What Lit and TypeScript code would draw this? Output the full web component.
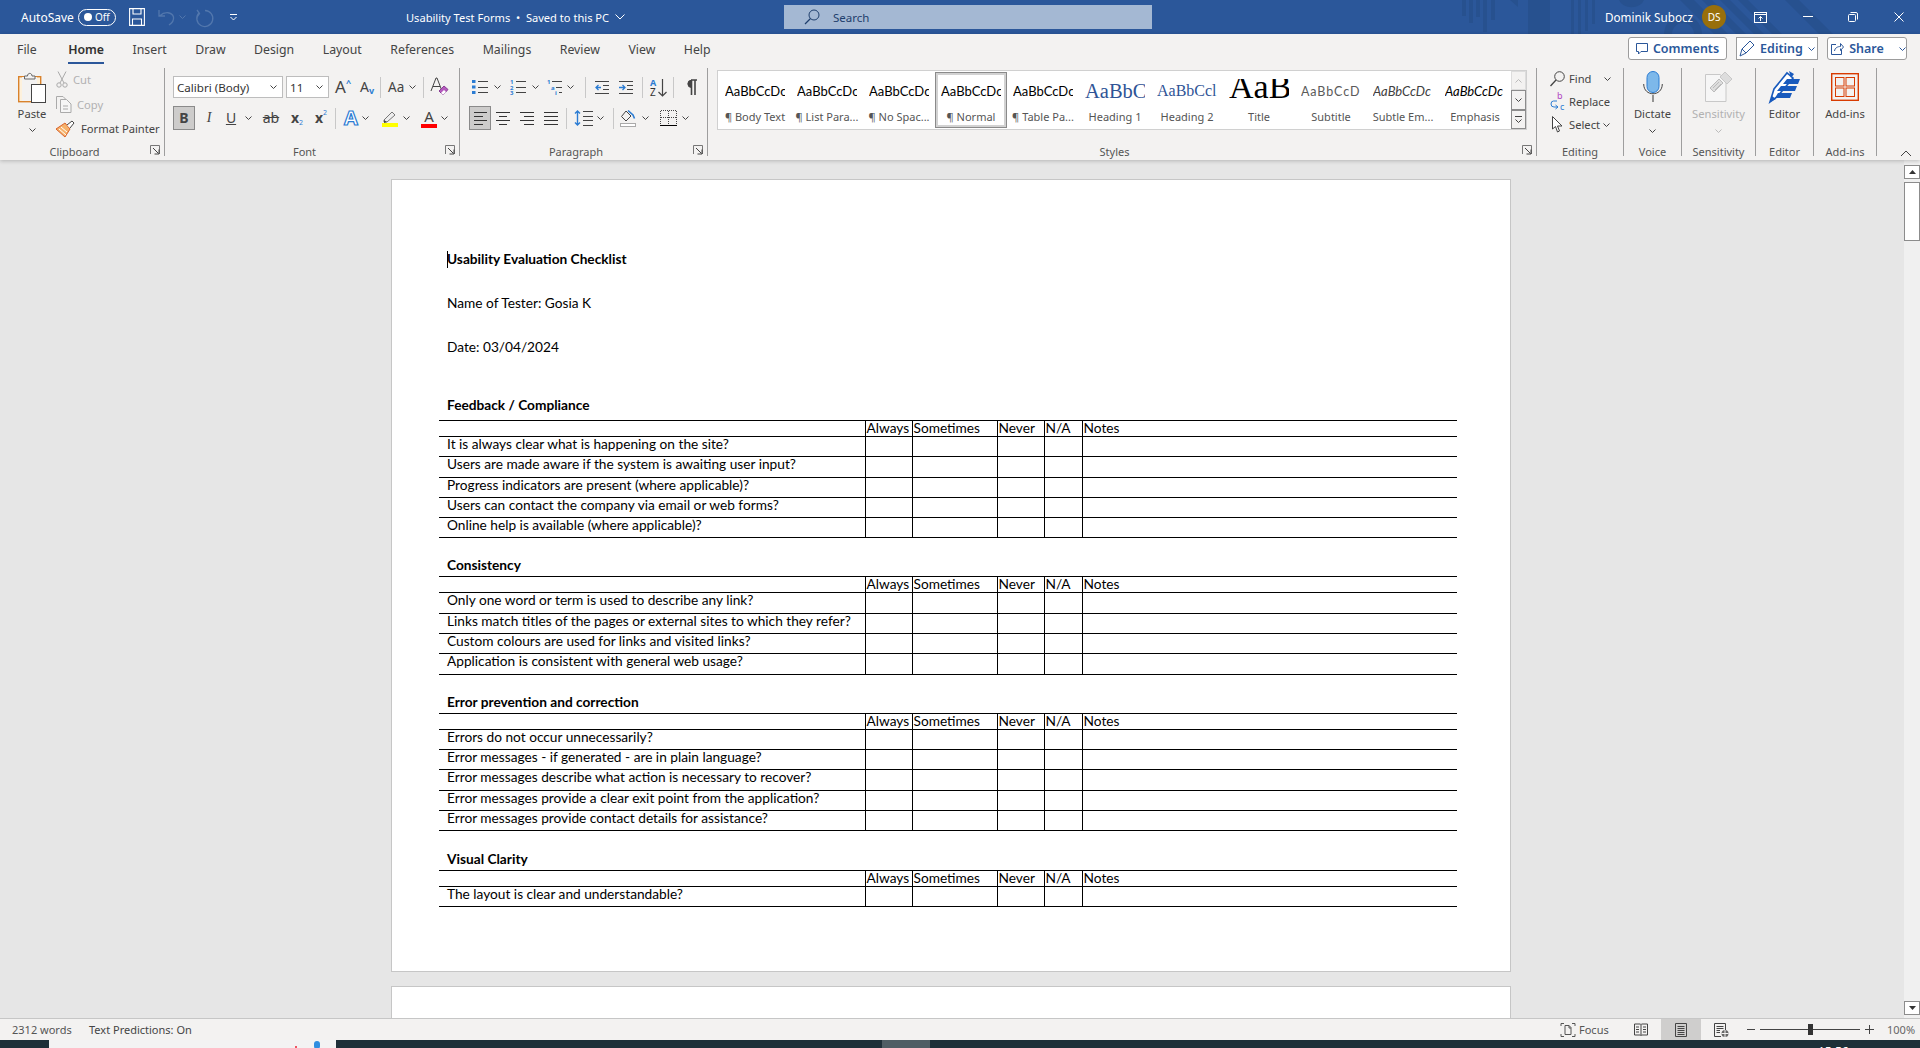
import { LitElement, css, html, svg } from "lit";
import { customElement } from "lit/decorators.js";

const ink = "#444";
const blue = "#2b7cd3";

// small helper so every icon is the same kind of svg
const ico = (w: number, h: number, body: unknown, cls = "") =>
  html`<svg class=${cls} width=${w} height=${h} viewBox="0 0 ${w} ${h}" fill="none">${body}</svg>`;

const chev = (color = "#444") =>
  ico(7, 4, svg`<path d="M.5.5 3.5 3.5 6.5.5" stroke=${color}/>`, "chev");

const lines = (x1: number, x2: number, ys: number[], color = ink) =>
  ys.map((y) => svg`<path d="M${x1} ${y}.5H${x2}" stroke=${color}/>`);

const launcher = ico(
  10,
  10,
  svg`<path d="M.5 9V.5H9.5V9" stroke="#777" fill="none"/><path d="M3 3 8.5 8.5M4.5 9H9V4.5" stroke="#444"/>`,
  "launcher"
);

const tiny = (x: number, y: number, t: string) =>
  svg`<text x=${x} y=${y} font-size="6" font-weight="700" fill=${blue} font-family="Noto Sans">${t}</text>`;

const bullets = ico(
  17,
  16,
  svg`<rect y="1" width="3.5" height="3" fill=${blue}/><rect y="6.5" width="3.5" height="3" fill=${blue}/><rect y="12" width="3.5" height="3" fill=${blue}/>${lines(6, 16, [2, 8, 13])}`
);
const numbering = ico(17, 16, svg`${tiny(0, 5, "1")}${tiny(0, 10.5, "2")}${tiny(0, 16, "3")}${lines(6, 16, [2, 8, 13])}`);
const multilevel = ico(
  17,
  16,
  svg`${tiny(0, 5, "1")}${tiny(4, 10.5, "a")}${tiny(8, 16, "i")}${lines(5, 15, [2])}${lines(9, 15, [8])}${lines(12, 15, [13])}`
);
const outdent = ico(
  15,
  15,
  svg`${lines(0, 14, [1, 13])}${lines(8, 14, [5, 9])}<path d="M6 7.5H1M3.5 5 1 7.5 3.5 10" stroke=${blue} stroke-width="1.3"/>`
);
const indent = ico(
  15,
  15,
  svg`${lines(0, 14, [1, 13])}${lines(8, 14, [5, 9])}<path d="M0 7.5H6M3.5 5 6 7.5 3.5 10" stroke=${blue} stroke-width="1.3"/>`
);
const sortAz = ico(
  17,
  19,
  svg`<text x="0" y="8" font-size="9" font-weight="700" fill=${blue} font-family="Noto Sans">A</text><text x="0" y="18" font-size="10" fill="#333" font-family="Noto Sans">Z</text><path d="M12.5 1V18M8.5 14l4 4 4-4" stroke="#444" stroke-width="1.2"/>`
);
const pilcrow = ico(
  13,
  16,
  svg`<path d="M6 1h6M6.500 1v15M10 1v15" stroke="#444" stroke-width="1.6"/><path d="M6.500 1.200A3.500 3.500 0 0 0 6.500 8.500Z" fill="#444" stroke="#444"/>`
);
const alignIcon = (spans: [number, number][]) =>
  ico(
    15,
    14,
    spans.map(([a, b], i) => svg`<path d="M${a} ${i * 4 + 1}.5H${b}" stroke="#333"/>`)
  );
const lineSpacing = ico(
  20,
  18,
  svg`<path d="M3.500 2V16M1 4.500 3.500 2 6 4.500M1 13.500 3.500 16 6 13.500" stroke=${blue} stroke-width="1.4"/>${lines(9, 19, [2, 7, 11, 16])}`
);
const shading = ico(
  17,
  18,
  svg`<path d="M6 2 1.500 7.500 6 12l5-5Z" stroke="#444"/><path d="M8 1.500 13 6l1.500 3.500" stroke=${blue} stroke-width="1.6"/><rect x=".5" y="14.500" width="15" height="3" stroke="#aaa" fill="#fff"/>`
);
const borders = ico(
  17,
  16,
  svg`<path d="M.5 1V15M16.500 1V15M8.500 1V15M1 .5H16M1 7.500H16" stroke="#444" stroke-dasharray="1 1"/><path d="M0 15.500H17" stroke="#000"/>`
);

const highlight = ico(
  17,
  17,
  svg`<path d="M2 10 10 2l3 3-8 7H2Z" stroke="#777" fill="#eee"/><path d="M2 10l3 2-3 1Z" fill="#444"/><rect y="13" width="16" height="4" fill="#ffff00"/>`
);

const clipboard = ico(
  28,
  32,
  svg`<rect x=".7" y="4.700" width="22" height="25" fill="#fdf1dc" stroke="#d9822b" stroke-width="1.4"/>
    <rect x="4" y="5" width="15" height="24" fill="#f3f2f1"/>
    <path d="M6.500 7V4H9.500C9.500 .5 14 .5 14 4H17V7Z" fill="#f3f2f1" stroke="#666"/>
    <rect x="13.500" y="12.500" width="14" height="18" fill="#fff" stroke="#444"/>`
);
const scissors = ico(
  12,
  17,
  svg`<path d="M2 .5 8 12M10 .5 4 12" stroke="#aaa"/><circle cx="3" cy="14" r="2.200" stroke="#aaa"/><circle cx="9" cy="14" r="2.200" stroke="#aaa"/>`
);
const copyIcon = ico(
  16,
  17,
  svg`<path d="M.5 13V.5H7L10 3.500" stroke="#aaa"/><path d="M4.500 3.500H10.500L15 8V16.500H4.500Z" stroke="#aaa" fill="#f6f6f6"/><path d="M7 10h5M7 13h5" stroke="#aaa"/>`
);
const painter = ico(
  20,
  18,
  svg`<path d="M0 9 9 3l5 6-5 8Z" fill="#f6b26b" stroke="#d9622b"/><path d="M3 9l7 6M5 7l6 5" stroke="#fff"/><path d="M11 5 16 1l2 2-4 5" fill="#fff" stroke="#444"/>`
);
const fancyA = html`<span class="fancy-a">A</span>`;
const clearFmt = ico(
  19,
  20,
  svg`<path d="M1 14 6 1h1l5 13M3 9.500H10" stroke="#444"/><path d="M9 14 14 9l4 3.500-5 5.500Z" fill="#b45bbd" stroke="#8a3d96"/><path d="M11 16l3-3 2 2-3 3Z" fill="#fff"/>`
);

const findIcon = ico(
  15,
  16,
  svg`<circle cx="9.500" cy="5.500" r="4.800" stroke="#444"/><path d="M6 9 .5 15" stroke="#444" stroke-width="1.3"/>`
);
const replaceIcon = ico(
  16,
  19,
  svg`<text x="7" y="7" font-size="9" fill="#b146c2" font-family="Noto Sans">b</text><text x="10" y="18" font-size="9" fill=${blue} font-family="Noto Sans">c</text><path d="M7 9H3.500Q1 9 1 12t3 3H8M5.500 13 8 15 5.500 17" stroke=${blue}/>`
);
const selectIcon = ico(
  11,
  17,
  svg`<path d="M.5.500V13L3.500 10.500 5.500 16 7.500 15 5.500 10H10Z" fill="#fff" stroke="#444"/>`
);
const micIcon = ico(
  20,
  31,
  svg`<rect x="4" y=".5" width="12" height="21" rx="6" fill="#7db8ea" stroke="#2b7cd3"/><path d="M.7 13C.7 26 19.300 26 19.300 13" stroke="#444"/><path d="M10 24V31" stroke="#555" stroke-width="1.2"/>`
);
const sensIcon = ico(
  28,
  31,
  svg`<path d="M.5 3.500H15L21 9V30.500H.5Z" fill="#f6f6f6" stroke="#c8c8c8"/><path d="M5 17 14 8l4 4-9 9Z" fill="#ddd" stroke="#bbb"/><path d="M8 17l6-6M10 19l6-6" stroke="#bbb"/><path d="M15 6 20 1l7 7-5 5Z" fill="#ddd" stroke="#c8c8c8"/>`
);
const editorIcon = ico(
  32,
  33,
  svg`<path d="M1 32 5 19 18 3l6 5L8 27Z" fill="#fff" stroke="#185abd" stroke-width="1.600"/><path d="M1 32l6-3-4-3Z" fill="#185abd"/><path d="M20 1l5 3-3 4ZM18 9H31l-2 5H14ZM12 16H28l-2 5H8ZM9 23H23l-2 5H6Z" fill="#185abd"/>`
);
const addinsIcon = ico(
  28,
  28,
  svg`<rect x=".7" y=".7" width="26.600" height="26.600" stroke="#d83b01" stroke-width="1.4"/><rect x="4.500" y="4.500" width="8.500" height="8.500" stroke="#d83b01"/><rect x="15" y="4.500" width="8.500" height="8.500" stroke="#d83b01"/><rect x="4.500" y="15" width="8.500" height="8.500" stroke="#d83b01"/><rect x="15" y="15" width="8.500" height="8.500" stroke="#d83b01"/>`
);

interface StyleItem {
  sample: string;
  label: string;
  cls?: string;
}
const galleryItems: StyleItem[] = [
  { sample: "AaBbCcDc", label: "¶ Body Text" },
  { sample: "AaBbCcDc", label: "¶ List Para..." },
  { sample: "AaBbCcDc", label: "¶ No Spac..." },
  { sample: "AaBbCcDc", label: "¶ Normal", cls: "selected" },
  { sample: "AaBbCcDc", label: "¶ Table Pa..." },
  { sample: "AaBbC", label: "Heading 1", cls: "h1" },
  { sample: "AaBbCcl", label: "Heading 2", cls: "h2" },
  { sample: "AaB", label: "Title", cls: "title" },
  { sample: "AaBbCcD", label: "Subtitle", cls: "subtitle" },
  { sample: "AaBbCcDc", label: "Subtle Em...", cls: "subtle" },
  { sample: "AaBbCcDc", label: "Emphasis", cls: "emph" },
];

interface Section {
  title: string;
  rows: string[];
}
const sections: Section[] = [
  {
    title: "Feedback / Compliance",
    rows: [
      "It is always clear what is happening on the site?",
      "Users are made aware if the system is awaiting user input?",
      "Progress indicators are present (where applicable)?",
      "Users can contact the company via email or web forms?",
      "Online help is available (where applicable)?",
    ],
  },
  {
    title: "Consistency",
    rows: [
      "Only one word or term is used to describe any link?",
      "Links match titles of the pages or external sites to which they refer?",
      "Custom colours are used for links and visited links?",
      "Application is consistent with general web usage?",
    ],
  },
  {
    title: "Error prevention and correction",
    rows: [
      "Errors do not occur unnecessarily?",
      "Error messages - if generated - are in plain language?",
      "Error messages describe what action is necessary to recover?",
      "Error messages provide a clear exit point from the application?",
      "Error messages provide contact details for assistance?",
    ],
  },
  {
    title: "Visual Clarity",
    rows: ["The layout is clear and understandable?"],
  },
];

const tabs = ["File", "Home", "Insert", "Draw", "Design", "Layout", "References", "Mailings", "Review", "View", "Help"];
const answers = ["Always", "Sometimes", "Never", "N/A", "Notes"];

@customElement("app-root")
export class AppRoot extends LitElement {
  static styles = css`
    :host {
      display: block;
      width: 1920px;
      height: 1048px;
      overflow: hidden;
      font-family: "Noto Sans", "Open Sans", sans-serif;
      font-size: 12px;
      color: #444;
      background: #e6e6e6;
    }
    * {
      box-sizing: border-box;
    }
    svg {
      display: block;
      flex: none;
      overflow: visible;
    }
    .shell {
      display: flex;
      flex-direction: column;
      height: 1048px;
    }

    /* title bar */
    .titlebar {
      position: relative;
      flex: none;
      height: 34px;
      background: #2b579a;
      color: #fff;
      display: flex;
      align-items: center;
      padding-left: 21px;
    }
    .art {
      position: absolute;
      left: 1440px;
      top: 0;
    }
    .autosave {
      width: 57px;
      font-size: 12px;
    }
    .toggle {
      width: 38px;
      height: 17px;
      border: 1.2px solid #fff;
      border-radius: 9px;
      display: flex;
      align-items: center;
      gap: 3px;
      padding-left: 5px;
      font-size: 10px;
      margin-right: 13px;
    }
    .toggle i {
      width: 8px;
      height: 8px;
      border-radius: 50%;
      background: #fff;
    }
    .qat {
      display: flex;
      align-items: center;
    }
    .qat .undo {
      margin-left: 13px;
    }
    .qat .chev {
      margin-left: 4px;
    }
    .qat .redo {
      margin-left: 10px;
    }
    .qat .custom {
      margin-left: 16px;
    }
    .doc-title {
      position: absolute;
      left: 406px;
      top: 0;
      height: 34px;
      display: flex;
      align-items: center;
      gap: 6px;
      font-size: 11.1px;
      white-space: nowrap;
    }
    .search {
      position: absolute;
      left: 784px;
      top: 5px;
      width: 368px;
      height: 24px;
      background: #a4b8d3;
      color: #1f3f6d;
      display: flex;
      align-items: center;
      gap: 13px;
      padding-left: 20px;
      font-size: 11.5px;
    }
    .user {
      position: absolute;
      left: 1605px;
      top: 0;
      height: 34px;
      display: flex;
      align-items: center;
      font-size: 11.7px;
      white-space: nowrap;
    }
    .avatar {
      width: 24px;
      height: 24px;
      border-radius: 50%;
      background: #986f0b;
      display: flex;
      align-items: center;
      justify-content: center;
      font-size: 10px;
      margin-left: 9px;
      margin-right: 28px;
    }
    .winbtns {
      display: flex;
      align-items: center;
      gap: 35.5px;
    }

    /* ribbon */
    .ribbon {
      flex: none;
      height: 126px;
      background: #f3f2f1;
      box-shadow: 0 1px 4px rgba(0, 0, 0, 0.22);
      position: relative;
      z-index: 2;
      font-size: 11.2px;
    }
    .tabrow {
      position: relative;
      height: 30px;
      display: flex;
      align-items: center;
      gap: 28.5px;
      padding-left: 17px;
      font-size: 12.3px;
      color: #444;
    }
    .tab.active {
      color: #323130;
      font-weight: 600;
      position: relative;
      margin-left: 3px;
    }
    .tab.active::after {
      content: "";
      position: absolute;
      left: 0;
      right: 0;
      bottom: -6px;
      height: 2px;
      background: #2b579a;
    }
    .actions {
      position: absolute;
      left: 1628px;
      top: 3px;
      display: flex;
      gap: 9px;
    }
    .action {
      height: 23px;
      background: #fff;
      border: 1px solid #9c9c9c;
      border-radius: 3px;
      display: flex;
      align-items: center;
      justify-content: center;
      gap: 5px;
      color: #2b579a;
      font-size: 12.5px;
      font-weight: 600;
    }
    .action.comments {
      width: 99px;
    }
    .action.editing {
      width: 82px;
      border-radius: 0;
    }
    .action.share {
      width: 80px;
      padding-left: 3px;
    }
    .groups {
      display: flex;
      height: 96px;
      padding-top: 4px;
    }
    .group {
      position: relative;
      flex: none;
      height: 88px;
      border-right: 1px solid #9e9e9e;
    }
    .g-label {
      position: absolute;
      left: 0;
      right: 0;
      top: 77px;
      text-align: center;
      font-size: 11px;
      line-height: 14px;
      color: #555;
    }
    .launched .g-label {
      right: 15px;
    }
    .launcher {
      position: absolute;
      right: 4px;
      bottom: 1px;
    }
    .g-clip {
      width: 165px;
      display: flex;
      padding-left: 16px;
    }
    .paste {
      width: 32px;
      display: flex;
      flex-direction: column;
      align-items: center;
      padding-top: 4px;
      color: #444;
    }
    .paste span {
      margin-top: 2px;
      line-height: 16px;
    }
    .paste .chev {
      margin-top: 6px;
    }
    .clip-list {
      margin-left: 8px;
      display: flex;
      flex-direction: column;
      gap: 4.5px;
      padding-top: 1.5px;
    }
    .clip-list div {
      display: flex;
      align-items: center;
      height: 20px;
      gap: 5px;
      white-space: nowrap;
    }
    .muted {
      color: #b1b1b1;
    }
    .g-font {
      width: 295px;
      padding: 7px 0 0 8px;
    }
    .g-para {
      width: 248px;
      padding: 7px 0 0 9px;
    }
    .row {
      display: flex;
      align-items: center;
      height: 24px;
    }
    .row + .row {
      margin-top: 7px;
    }
    .combo {
      height: 22px;
      background: #fff;
      border: 1px solid #bdbdbd;
      display: flex;
      align-items: center;
      justify-content: space-between;
      padding: 0 5px 0 3px;
      font-size: 11.6px;
      color: #333;
    }
    .combo.name {
      width: 110px;
      margin-right: 3px;
    }
    .combo.size {
      width: 43px;
      margin-right: 6px;
    }
    .growA {
      font-size: 17px;
      line-height: 20px;
      display: flex;
      width: 25px;
      color: #444;
    }
    .growA.small {
      font-size: 14px;
      width: 20px;
      align-items: flex-end;
    }
    .growA em {
      font-style: normal;
      color: #2b7cd3;
      font-size: 9px;
      font-weight: 700;
      line-height: 12px;
    }
    .sep {
      width: 1px;
      height: 21px;
      background: #c8c8c8;
      flex: none;
    }
    .btn {
      display: flex;
      align-items: center;
      justify-content: center;
      flex: none;
      color: #444;
    }
    .on {
      background: #cdcccb;
      border: 1px solid #8a8a8a;
      height: 24px;
    }
    .aa {
      font-size: 13.5px;
      margin-right: 5px;
    }
    .w22 {
      width: 22px;
    }
    .fmt {
      font-size: 14px;
      line-height: 18px;
    }
    .bold {
      width: 22px;
      font-weight: 700;
      margin-right: 6px;
    }
    .ital {
      width: 16px;
      font-style: italic;
      font-family: "Liberation Serif", serif;
      margin-right: 8px;
    }
    .under {
      width: 12px;
      text-decoration: underline;
      margin-right: 8px;
    }
    .strike {
      width: 18px;
      text-decoration: line-through;
      margin: 0 10px 0 10px;
    }
    .script {
      width: 14px;
      font-weight: 700;
      margin-right: 10px;
    }
    .script b {
      color: #2b7cd3;
      font-size: 7px;
      font-weight: 400;
      line-height: 8px;
      position: relative;
    }
    .script b.down {
      top: 5px;
    }
    .script b.up {
      top: -5px;
    }
    .fancy-a {
      font-size: 20px;
      line-height: 20px;
      font-weight: 700;
      color: #fff;
      -webkit-text-stroke: 1.2px #2b7cd3;
      width: 16px;
      text-align: center;
    }
    .color-a {
      width: 16px;
      display: flex;
      flex-direction: column;
      align-items: center;
      font-size: 15px;
      line-height: 16px;
      color: #444;
    }
    .color-a i {
      width: 16px;
      height: 4px;
      background: #f00;
    }
    .m3 {
      margin-right: 3px;
    }
    .m4 {
      margin-right: 4px;
    }
    .m5 {
      margin-right: 5px;
    }
    .m6 {
      margin-right: 6px;
    }
    .m7 {
      margin-right: 7px;
    }
    .m8 {
      margin-right: 8px;
    }
    .m9 {
      margin-right: 9px;
    }
    .m11 {
      margin-right: 11px;
    }
    .m12 {
      margin-right: 12px;
    }
    .m13 {
      margin-right: 13px;
    }
    .g-styles {
      width: 829px;
      padding: 2px 0 0 9px;
    }
    .gallery {
      width: 810px;
      height: 60px;
      display: flex;
      background: #fff;
      border: 1px solid #d0d0d0;
    }
    .gal-items {
      display: flex;
      flex: 1;
      padding: 1px 0 0 1px;
    }
    .gal-item {
      width: 72px;
      height: 56px;
      display: flex;
      flex-direction: column;
      align-items: center;
      overflow: hidden;
      padding: 7px 6px 0;
    }
    .gal-item.selected {
      border: 3px solid #d2d2d2;
      outline: 1px solid #8a8a8a;
      outline-offset: -1px;
      padding: 4px 3px 0;
    }
    .sample {
      height: 24px;
      display: flex;
      align-items: center;
      justify-content: flex-start;
      width: 100%;
      overflow: hidden;
      white-space: nowrap;
      font-family: Lato, sans-serif;
      font-size: 13px;
      color: #000;
    }
    .gal-label {
      margin-top: 6px;
      font-size: 11px;
      line-height: 15px;
      color: #555;
      white-space: nowrap;
    }
    .h1 .sample {
      font-family: "Liberation Serif", serif;
      font-size: 20.5px;
      color: #2f5496;
    }
    .h2 .sample {
      font-family: "Liberation Serif", serif;
      font-size: 16px;
      color: #2f5496;
    }
    .title .sample {
      font-family: "Liberation Serif", serif;
      font-size: 34px;
      padding: 0 0 9px;
    }
    .subtitle .sample {
      color: #5a5a5a;
      letter-spacing: 0.9px;
      font-size: 12.5px;
    }
    .subtle .sample {
      color: #404040;
      font-style: italic;
    }
    .emph .sample {
      font-style: italic;
    }
    .gal-scroll {
      width: 15px;
      display: flex;
      flex-direction: column;
      flex: none;
    }
    .gal-scroll div {
      height: 20px;
      display: flex;
      flex-direction: column;
      align-items: center;
      justify-content: center;
      gap: 2px;
      border: 1px solid #8c8c8c;
      background: #f3f2f1;
    }
    .gal-scroll .up {
      border-color: #ddd;
    }
    .g-edit {
      width: 87px;
      padding: 0 0 0 12px;
    }
    .edit-row {
      height: 23px;
      display: flex;
      align-items: center;
      white-space: nowrap;
    }
    .edit-row:first-child {
      margin-top: -1px;
    }
    .edit-ico {
      width: 17px;
      flex: none;
      display: flex;
      justify-content: center;
      margin-right: 3px;
    }
    .big {
      display: flex;
      flex-direction: column;
      align-items: center;
      padding-top: 2px;
    }
    .big-ico {
      height: 33px;
      display: flex;
      align-items: center;
    }
    .big span {
      margin-top: 3px;
      line-height: 16px;
    }
    .big .chev {
      margin-top: 7px;
    }
    .collapse {
      position: absolute;
      left: 1900px;
      top: 116px;
    }

    /* document */
    .workspace {
      flex: 1;
      min-height: 0;
      display: flex;
      position: relative;
    }
    .canvas {
      flex: 1;
      overflow: hidden;
      padding: 19px 0 0 391px;
    }
    .page {
      width: 1120px;
      height: 793px;
      background: #fff;
      border: 1px solid #c6c6c6;
      padding: 69px 0 0 55px;
      font-family: Lato, sans-serif;
      font-size: 13.7px;
      color: #000;
    }
    .page.next {
      margin-top: 14px;
      height: 60px;
    }
    .para {
      height: 20px;
      line-height: 20px;
      position: relative;
    }
    .para.bold-line {
      font-weight: 700;
    }
    .para + .para {
      margin-top: 24px;
    }
    .caret {
      position: absolute;
      left: 0;
      top: 2px;
      width: 1px;
      height: 17px;
      background: #000;
    }
    .section h2 {
      margin: 17px 0 1px;
      height: 20px;
      line-height: 20px;
      font-size: inherit;
      font-weight: 700;
    }
    .section.first h2 {
      margin: 38px 0 5px;
    }
    .section:last-child h2 {
      margin-top: 18px;
    }
    table {
      border-collapse: collapse;
      table-layout: fixed;
      width: 1018px;
      margin-left: -8px;
    }
    th,
    td {
      border-bottom: 1px solid #000;
      font-weight: 400;
      text-align: left;
      padding: 0 0 0 1px;
      overflow: hidden;
      white-space: nowrap;
    }
    tr:first-child th {
      border-top: 1px solid #000;
    }
    th + th,
    td + td {
      border-left: 1px solid #000;
    }
    tr.head th {
      height: 16px;
      line-height: 14px;
      vertical-align: top;
    }
    tr.item td {
      height: 20.3px;
      line-height: 14px;
      vertical-align: top;
    }
    td:first-child {
      padding-left: 8px;
    }
    .c0 {
      width: 426px;
    }
    .c1 {
      width: 47px;
    }
    .c2 {
      width: 85px;
    }
    .c3 {
      width: 47px;
    }
    .c4 {
      width: 38px;
    }
    .c5 {
      width: 375px;
    }

    /* scrollbar */
    .vscroll {
      width: 16px;
      flex: none;
      background: #f0f0f0;
      display: flex;
      flex-direction: column;
      padding-top: 5px;
    }
    .sb-btn {
      height: 14px;
      background: #fff;
      border: 1px solid #8c8c8c;
      display: flex;
      align-items: center;
      justify-content: center;
    }
    .thumb {
      height: 59px;
      margin-top: 3px;
      background: #fff;
      border: 1px solid #8c8c8c;
    }
    .sb-fill {
      flex: 1;
    }
    .sb-btn.down {
      margin-bottom: 3px;
    }

    /* status bar */
    .status {
      flex: none;
      height: 22px;
      background: #f3f2f1;
      border-top: 1px solid #c6c6c6;
      display: flex;
      align-items: center;
      font-size: 11px;
      color: #555;
      padding-left: 12px;
      position: relative;
      z-index: 1;
    }
    .status .words {
      width: 77px;
    }
    .status .pred {
      width: 1472px;
      color: #444;
    }
    .s-focus {
      display: flex;
      align-items: center;
      gap: 4px;
      width: 60px;
      color: #555;
    }
    .view {
      width: 40px;
      height: 21px;
      display: flex;
      align-items: center;
      justify-content: center;
      flex: none;
    }
    .view.on-view {
      background: #cfcecd;
    }
    .zoomer {
      display: flex;
      align-items: center;
      margin-left: 6px;
    }
    .slider {
      width: 100px;
      height: 1px;
      background: #444;
      margin: 0 5px;
      position: relative;
    }
    .slider i {
      position: absolute;
      left: 48px;
      top: -5px;
      width: 5px;
      height: 11px;
      background: #333;
    }
    .pct {
      margin-left: 13px;
      color: #666;
    }

    /* task bar peeking in below the window */
    .taskbar {
      flex: none;
      height: 8px;
      background: #1e2f38;
      position: relative;
      overflow: hidden;
      display: flex;
    }
    .tb-app {
      margin-left: 49px;
      width: 287px;
      background: #f3f3f3;
      position: relative;
    }
    .tb-dot {
      position: absolute;
      left: 265px;
      top: 1px;
      width: 6px;
      height: 8px;
      border-radius: 3px;
      background: #2f8ee0;
    }
    .tb-dot.red {
      left: 246px;
      top: 6px;
      width: 2px;
      height: 2px;
      background: #e23;
    }
    .tb-active {
      margin-left: 546px;
      width: 48px;
      background: #4f5d64;
    }
    .tb-clock {
      position: absolute;
      left: 1818px;
      top: 5px;
      color: #fff;
      font-size: 12px;
      line-height: 14px;
    }
  `;

  private section(s: Section, i: number) {
    return html`<div class="section ${i === 0 ? "first" : ""}">
      <h2>${s.title}</h2>
      <table>
        <colgroup>
          <col class="c0" /><col class="c1" /><col class="c2" /><col class="c3" /><col class="c4" /><col class="c5" />
        </colgroup>
        <thead>
          <tr class="head">
            <th></th>
            ${answers.map((a) => html`<th>${a}</th>`)}
          </tr>
        </thead>
        <tbody>
          ${s.rows.map(
            (r) => html`<tr class="item">
              <td>${r}</td>
              ${answers.map(() => html`<td></td>`)}
            </tr>`
          )}
        </tbody>
      </table>
    </div>`;
  }

  private titlebar() {
    return html`<div class="titlebar">
      <svg class="art" width="480" height="34" viewBox="0 0 480 34" fill="none">
        <g fill="#27518f">
          <rect x="22" y="0" width="4" height="16" />
          <rect x="29" y="0" width="4" height="23" />
          <rect x="36" y="0" width="4" height="17" />
          <rect x="43" y="0" width="4" height="32" />
          <rect x="51" y="0" width="4" height="20" />
          <path d="M70 0h8v7l-8-7ZM88 0h22V34H88Z" />
          <rect x="131" y="0" width="3" height="34" />
          <rect x="138" y="0" width="3" height="34" />
          <rect x="145" y="0" width="3" height="31" />
          <rect x="152" y="0" width="3" height="24" />
          <path d="M179 0h25a13 10 0 0 1-25 0Z" />
          <path d="M224 34a19 19 0 0 1 38 0h-8a11 11 0 0 0-22 0Z" />
          <path d="M240 0h14l34 34h-14ZM262 0h10l34 34h-10ZM280 0h10l34 34h-10ZM298 0h10l34 34h-10Z" />
          <path d="M345 0h14l34 34h-14Z" />
        </g>
      </svg>
      <span class="autosave">AutoSave</span>
      <div class="toggle"><i></i>Off</div>
      <div class="qat">
        ${ico(
          16,
          18,
          svg`<path d="M.6.600H15.400V17.400H.6ZM4 .6V6H12V.6M3.500 17.400V11H12.500V17.400" stroke="#fff" stroke-width="1.1"/>`
        )}
        ${ico(
          17,
          18,
          svg`<path d="M1 2V8H7M1.500 8C7 3 14 4 15.500 9 16 12 14 15 11 17" stroke="#5277ad" stroke-width="1.300"/>`,
          "undo"
        )}
        ${chev("#5277ad")}
        ${ico(
          18,
          18,
          svg`<path d="M9 1.500A8 8 0 1 1 3 4M1 1 3.500 4.500 1 8" stroke="#5277ad" stroke-width="1.300" transform="translate(0 1)"/>`,
          "redo"
        )}
        ${ico(7, 7, svg`<path d="M0 .5H7M.5 3 3.500 6 6.500 3" stroke="#fff"/>`, "custom")}
      </div>
      <div class="doc-title">
        <span>Usability Test Forms&nbsp; •&nbsp; Saved to this PC</span>
        ${ico(10, 6, svg`<path d="M.5.500 5 5 9.500.500" stroke="#fff"/>`)}
      </div>
      <div class="search">
        ${ico(
          16,
          16,
          svg`<circle cx="10" cy="6" r="5" stroke="#1f3f6d"/><path d="M6.500 9.500 1 15" stroke="#1f3f6d" stroke-width="1.3"/>`
        )}
        <span>Search</span>
      </div>
      <div class="user">
        <span>Dominik Subocz</span>
        <div class="avatar">DS</div>
        <div class="winbtns">
          ${ico(
            13,
            11,
            svg`<rect x=".5" y=".5" width="12" height="10" stroke="#fff"/><path d="M.5 2.500H12.500M6.500 9V4.500M4.500 6.500l2-2 2 2" stroke="#fff"/>`
          )}
          ${ico(10, 2, svg`<path d="M0 .5H10" stroke="#fff"/>`)}
          ${ico(10, 10, svg`<rect x=".5" y="2.500" width="7" height="7" rx="1" stroke="#fff"/><path d="M2.500.5H8A1.500 1.500 0 0 1 9.500 2V7.500" stroke="#fff"/>`)}
          ${ico(10, 10, svg`<path d="M.5.500 9.500 9.500M9.500.500.5 9.500" stroke="#fff"/>`)}
        </div>
      </div>
    </div>`;
  }

  private fontGroup() {
    return html`<div class="group g-font launched">
      <div class="row">
        <div class="combo name">Calibri (Body) ${chev()}</div>
        <div class="combo size">11 ${chev()}</div>
        <div class="growA">A<em>^</em></div>
        <div class="growA small">A<em>v</em></div>
        <div class="sep m7"></div>
        <div class="btn aa">Aa</div>
        ${chev()}
        <span class="m7"></span>
        <div class="sep m6"></div>
        ${clearFmt}
      </div>
      <div class="row">
        <div class="btn on fmt bold">B</div>
        <div class="btn fmt ital">I</div>
        <div class="btn fmt under">U</div>
        ${chev()}
        <div class="btn fmt strike">ab</div>
        <div class="btn fmt script">x<b class="down">2</b></div>
        <div class="btn fmt script m7">x<b class="up">2</b></div>
        <div class="sep m7"></div>
        ${fancyA}<span class="m3"></span>${chev()}
        <span class="m13"></span>${highlight}<span class="m4"></span>${chev()}
        <span class="m11"></span>
        <div class="color-a">A<i></i></div>
        <span class="m4"></span>${chev()}
      </div>
      <div class="g-label">Font</div>
      ${launcher}
    </div>`;
  }

  private paragraphGroup() {
    return html`<div class="group g-para launched">
      <div class="row">
        <span class="m3"></span>${bullets}<span class="m5"></span>${chev()}
        <span class="m9"></span>${numbering}<span class="m5"></span>${chev()}
        <span class="m8"></span>${multilevel}<span class="m3"></span>${chev()}
        <span class="m11"></span><div class="sep m9"></div>
        ${outdent}<span class="m9"></span>${indent}<span class="m8"></span>
        <div class="sep m7"></div>
        ${sortAz}<span class="m6"></span><div class="sep m11"></div>
        ${pilcrow}
      </div>
      <div class="row">
        <div class="btn on m5 w22">${alignIcon([[1, 14], [1, 10], [1, 14], [1, 10]])}</div>
        ${alignIcon([[0, 14], [3, 11], [0, 14], [3, 11]])}<span class="m9"></span>
        ${alignIcon([[0, 14], [4, 14], [0, 14], [4, 14]])}<span class="m9"></span>
        ${alignIcon([[0, 14], [0, 14], [0, 14], [0, 14]])}<span class="m7"></span>
        <div class="sep m7"></div>
        ${lineSpacing}<span class="m3"></span>${chev()}<span class="m9"></span>
        <div class="sep m6"></div>
        ${shading}<span class="m5"></span>${chev()}<span class="m11"></span>
        ${borders}<span class="m5"></span>${chev()}
      </div>
      <div class="g-label">Paragraph</div>
      ${launcher}
    </div>`;
  }

  private stylesGroup() {
    return html`<div class="group g-styles launched">
      <div class="gallery">
        <div class="gal-items">
          ${galleryItems.map(
            (it) => html`<div class="gal-item ${it.cls ?? ""}">
              <div class="sample">${it.sample}</div>
              <div class="gal-label">${it.label}</div>
            </div>`
          )}
        </div>
        <div class="gal-scroll">
          <div class="up">${ico(7, 4, svg`<path d="M.5 3.500 3.500.5 6.500 3.500" stroke="#bbb"/>`)}</div>
          <div>${chev()}</div>
          <div>${ico(7, 1, svg`<path d="M0 .5H7" stroke="#444"/>`)}${chev()}</div>
        </div>
      </div>
      <div class="g-label">Styles</div>
      ${launcher}
    </div>`;
  }

  private bigGroup(width: number, icon: unknown, text: string, label: string, drop = false, muted = false) {
    // widths of these groups differ per label
    return html`<div class="group" style="width:${width}px">
      <div class="big ${muted ? "muted" : ""}">
        <div class="big-ico">${icon}</div>
        <span>${text}</span>
        ${drop ? chev(muted ? "#bbb" : "#444") : ""}
      </div>
      <div class="g-label">${label}</div>
    </div>`;
  }

  render() {
    return html`<div class="shell">
      ${this.titlebar()}
      <div class="ribbon">
        <div class="tabrow">
          ${tabs.map((t) => html`<span class="tab ${t === "Home" ? "active" : ""}">${t}</span>`)}
          <div class="actions">
            <div class="action comments">
              ${ico(12, 12, svg`<path d="M.5.500H11.500V8.500H5L2.500 11V8.500H.5Z" stroke="#2b579a"/>`)} Comments
            </div>
            <div class="action editing">
              ${ico(16, 17, svg`<path d="M1 16 3 9 11 1l4 4-8 8Z M3 9l4 4" stroke="#2b579a"/>`)} Editing ${chev("#2b579a")}
            </div>
            <div class="action share">
              ${ico(13, 13, svg`<path d="M5 2.500H.5V12.500H10.500V8M3.500 9C4 5.500 7 4.500 9.500 4.500V1.500L12.500 5 9.500 8.500V6.500" stroke="#2b579a"/>`)}
              Share <span class="m5"></span>${chev("#2b579a")}
            </div>
          </div>
        </div>
        <div class="groups">
          <div class="group g-clip launched">
            <div class="paste">${clipboard}<span>Paste</span>${chev()}</div>
            <div class="clip-list">
              <div class="muted">${scissors}<span>Cut</span></div>
              <div class="muted">${copyIcon}<span>Copy</span></div>
              <div>${painter}<span>Format Painter</span></div>
            </div>
            <div class="g-label">Clipboard</div>
            ${launcher}
          </div>
          ${this.fontGroup()} ${this.paragraphGroup()} ${this.stylesGroup()}
          <div class="group g-edit">
            <div class="edit-row"><span class="edit-ico">${findIcon}</span>Find<span class="m12"></span>${chev()}</div>
            <div class="edit-row"><span class="edit-ico">${replaceIcon}</span>Replace</div>
            <div class="edit-row"><span class="edit-ico">${selectIcon}</span>Select<span class="m3"></span>${chev()}</div>
            <div class="g-label">Editing</div>
          </div>
          ${this.bigGroup(58, micIcon, "Dictate", "Voice", true)}
          ${this.bigGroup(74, sensIcon, "Sensitivity", "Sensitivity", true, true)}
          ${this.bigGroup(58, editorIcon, "Editor", "Editor")}
          ${this.bigGroup(63, addinsIcon, "Add-ins", "Add-ins")}
        </div>
        <div class="collapse">${ico(12, 7, svg`<path d="M1 6 6 1l5 5" stroke="#444"/>`)}</div>
      </div>
      <div class="workspace">
        <div class="canvas">
          <div class="page">
            <div class="para bold-line"><span class="caret"></span>Usability Evaluation Checklist</div>
            <div class="para">Name of Tester: Gosia K</div>
            <div class="para">Date: 03/04/2024</div>
            ${sections.map((s, i) => this.section(s, i))}
          </div>
          <div class="page next"></div>
        </div>
        <div class="vscroll">
          <div class="sb-btn">${ico(7, 4, svg`<path d="M3.500 0 7 4H0Z" fill="#333"/>`)}</div>
          <div class="thumb"></div>
          <div class="sb-fill"></div>
          <div class="sb-btn down">${ico(7, 4, svg`<path d="M3.500 4 7 0H0Z" fill="#333"/>`)}</div>
        </div>
      </div>
      <div class="status">
        <span class="words">2312 words</span>
        <span class="pred">Text Predictions: On</span>
        <div class="s-focus">
          ${ico(14, 14, svg`<path d="M0 3V.5H3M11 .5H14V3M0 11V13.500H3M11 13.500H14V11" stroke="#555"/><path d="M4 2.500H8L10 4.500V11.500H4ZM8 2.500V5H10" stroke="#555"/>`)}
          Focus
        </div>
        <div class="view">
          ${ico(14, 13, svg`<path d="M.5 1H6.500L7 1.500 7.500 1H13.500V12H7.500L7 12.500 6.500 12H.5ZM7 1.500V12.500M2 4H5M2 6.500H5M2 9H5M9 4H12M9 6.500H12M9 9H12" stroke="#444"/>`)}
        </div>
        <div class="view on-view">
          ${ico(12, 14, svg`<path d="M.5.500H11.500V13.500H.5ZM2.500 3.500H9.500M2.500 5.500H9.500M2.500 7.500H9.500M2.500 9.500H9.500M2.500 11.500H9.500" stroke="#444"/>`)}
        </div>
        <div class="view">
          ${ico(15, 14, svg`<path d="M.5.500H11.500V7M7 13.500H.5V.5M2.500 3.500H9.500M2.500 5.500H9.500M2.500 7.500H6M2.500 9.500H6" stroke="#444"/><circle cx="11" cy="10.500" r="3.500" fill="#666"/><path d="M7.500 10.500H14.500M11 7V14" stroke="#f3f2f1"/>`)}
        </div>
        <div class="zoomer">
          ${ico(8, 1, svg`<path d="M0 .5H8" stroke="#444"/>`)}
          <div class="slider"><i></i></div>
          ${ico(9, 9, svg`<path d="M0 4.500H9M4.500 0V9" stroke="#444"/>`)}
          <span class="pct">100%</span>
        </div>
      </div>
      <div class="taskbar">
        <div class="tb-app"><span class="tb-dot red"></span><span class="tb-dot"></span></div>
        <div class="tb-active"></div>
        <span class="tb-clock">15:56</span>
      </div>
    </div>`;
  }
}
